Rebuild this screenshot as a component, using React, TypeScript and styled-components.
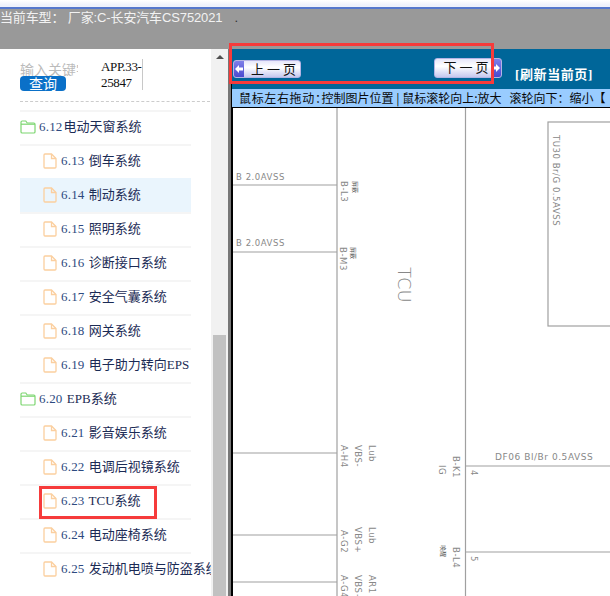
import React from "react";
import styled, { createGlobalStyle } from "styled-components";

const Global = createGlobalStyle`
  html, body { margin: 0; padding: 0; width: 610px; height: 596px; overflow: hidden; background: #fff; }
  #root { width: 610px; height: 596px; }
  * { box-sizing: border-box; }
`;

const CJK = `"Noto Sans CJK SC", sans-serif`;
const MIXED = `"Liberation Serif", "Noto Sans CJK SC", serif`;

const Page = styled.div`
  position: relative;
  width: 610px;
  height: 596px;
  overflow: hidden;
  display: flex;
  flex-direction: column;
  font-family: ${CJK};
`;

const TopStrip = styled.div`
  height: 9px;
  flex: none;
  background: linear-gradient(#ffffff, #eef1fb 70%);
  border-bottom: 2px solid #5577cc;
`;

const CarBar = styled.div`
  height: 40px;
  flex: none;
  background: #999999;
  color: #f2f2f2;
  font: 13px/17px "Liberation Sans", "Noto Sans CJK SC", sans-serif;
  letter-spacing: -0.13px;
  white-space: pre;
  display: flex;
  align-items: flex-start;
`;

const Dot = styled.span`
  margin-left: 12px;
  color: #333;
`;

const Main = styled.div`
  flex: 1;
  min-height: 0;
  display: flex;
`;

const Sidebar = styled.aside`
  width: 211px;
  flex: none;
  overflow: hidden;
  background: #fff;
  padding: 10px 0 0 20px;
`;

const SearchRow = styled.div`
  display: flex;
  width: 123px;
  height: 31px;
`;

const SearchLeft = styled.div`
  width: 81px;
  flex: none;
  padding-top: 3px;
`;

const KeyLabel = styled.div`
  width: 58px;
  height: 14px;
  overflow: hidden;
  white-space: nowrap;
  font-size: 14px;
  line-height: 14px;
  color: #bbbbbb;
`;

const QueryButton = styled.button`
  display: block;
  width: 46px;
  height: 15px;
  padding: 0;
  border: 0;
  border-radius: 4px;
  background: #0a70c8;
  color: #fff;
  font: 14px/15px ${CJK};
`;

const KeyInput = styled.div`
  width: 42px;
  height: 31px;
  border-right: 1px solid #c8c8c8;
  font: 13px/16px "Liberation Serif", serif;
  letter-spacing: -0.35px;
  color: #111;
`;

const Dashed = styled.div`
  width: 190px;
  margin-top: 11px;
  border-top: 1px dashed #cccccc;
`;

const Tree = styled.div`
  width: 171px;
  margin-top: 8px;
`;

const Row = styled.div<{ $file?: boolean; $active?: boolean }>`
  height: 34px;
  display: flex;
  align-items: center;
  gap: ${(p) => (p.$file ? "4px" : "3px")};
  padding-left: ${(p) => (p.$file ? "23px" : "0")};
  padding-bottom: 3px;
  border-top: 2px solid ${(p) => (p.$active ? "#eaf5fd" : "#f5f5f5")};
  background: ${(p) => (p.$active ? "#eaf5fd" : "transparent")};
  white-space: pre;
  font: 13px/16px ${MIXED};
  color: #1b2b55;
  svg {
    flex: none;
  }
`;

const Num = styled.span`
  color: #2d4a80;
  letter-spacing: 0.2px;
  margin-right: 1px;
`;

const Scrollbar = styled.div`
  width: 17px;
  flex: none;
  background: #f1f1f1;
  display: flex;
  flex-direction: column;
  align-items: center;
`;

const UpArrow = styled.div`
  margin-top: 6px;
  width: 0;
  height: 0;
  border-left: 4px solid transparent;
  border-right: 4px solid transparent;
  border-bottom: 4px solid #505050;
`;

const Thumb = styled.div`
  margin-top: 276px;
  width: 13px;
  flex: 1;
  background: #c1c1c1;
`;

const Splitter = styled.div`
  width: 3px;
  flex: none;
  background: #777777;
`;

const Viewer = styled.section`
  flex: 1;
  min-width: 0;
  display: flex;
  flex-direction: column;
  border-left: 1px solid #000;
`;

const NavBar = styled.div`
  height: 40px;
  flex: none;
  background: #006699;
  display: flex;
  align-items: flex-start;
`;

const PageButton = styled.button<{ $next?: boolean }>`
  width: 68px;
  height: ${(p) => (p.$next ? "20px" : "18px")};
  margin: ${(p) => (p.$next ? "9px 0 0 133px" : "11px 0 0 1px")};
  padding: 0;
  display: flex;
  flex-direction: ${(p) => (p.$next ? "row-reverse" : "row")};
  align-items: stretch;
  border: 1px solid #b4b4e4;
  border-radius: 3px;
  overflow: hidden;
  background: linear-gradient(#e6e6fa, #ffffff 40%, #c6c8ef);
  color: #111;
  font: 13px/16px ${CJK};
`;

const ArrowCap = styled.span`
  width: 10px;
  flex: none;
  display: flex;
  align-items: center;
  justify-content: center;
  background: linear-gradient(#7f7fe8, #4a4ad0);
`;

const PageLabel = styled.span<{ $next?: boolean }>`
  flex: 1;
  text-align: center;
  white-space: pre;
  padding-left: ${(p) => (p.$next ? "6px" : "3px")};
`;

const Refresh = styled.span`
  margin: 17px 0 0 13px;
  color: #fff;
  font: bold 13px/18px "Liberation Serif", "Noto Sans CJK SC", serif;
  letter-spacing: 0.6px;
  white-space: nowrap;
`;

const HintBar = styled.div`
  height: 19px;
  flex: none;
  background: #99ccff;
  border-bottom: 1px solid #000;
  color: #0a0a0a;
  font: 12px/17px ${CJK};
  white-space: pre;
  overflow: hidden;
  padding-left: 7px;
`;

const HintLead = styled.span`
  letter-spacing: 0.65px;
  font-feature-settings: "palt";
`;

const Diagram = styled.div`
  flex: 1;
  min-height: 0;
  background: #fff;
  border-left: 1px solid #000;
  overflow: hidden;
`;

const Sheet = styled.svg`
  display: block;
  text {
    font-family: "DejaVu Sans", sans-serif;
    font-size: 8.5px;
    fill: #888;
    letter-spacing: 0.55px;
  }
  .mark {
    font-family: "Noto Sans CJK SC", sans-serif;
    font-size: 6px;
    letter-spacing: 0;
    fill: #555;
  }
  .title {
    font-size: 18px;
    letter-spacing: 0;
    font-weight: 200;
  }
  .wide {
    font-size: 9px;
  }
`;

const Callout = styled.div<{ $x: number; $y: number; $w: number; $h: number }>`
  position: absolute;
  left: ${(p) => p.$x}px;
  top: ${(p) => p.$y}px;
  width: ${(p) => p.$w}px;
  height: ${(p) => p.$h}px;
  border: 3px solid #f63b3b;
  pointer-events: none;
`;

const FolderIcon = () => (
  <svg width="16" height="14" viewBox="0 0 16 14" fill="none" stroke="#7dd671" strokeWidth="1.2">
    <path d="M1 12V2.2C1 1.5 1.5 1 2.2 1h3.6l1.4 2h6.6c.7 0 1.2.5 1.2 1.2V12c0 .6-.5 1-1.2 1H2.2C1.5 13 1 12.6 1 12z" />
    <path d="M1 4.2h14" />
  </svg>
);

const FileIcon = () => (
  <svg width="14" height="16" viewBox="0 0 14 16" fill="none" stroke="#fbcf9f" strokeWidth="1.3">
    <path d="M1 2c0-.6.4-1 1-1h6.5L13 5.5V14c0 .6-.4 1-1 1H2c-.6 0-1-.4-1-1z" />
    <path d="M8.5 1v4.5H13" />
  </svg>
);

const ArrowGlyph = ({ right }: { right?: boolean }) => (
  <svg width="8" height="8" viewBox="0 0 8 8" fill="#fff">
    <path d={right ? "M4 0l4 4-4 4V5.5H0v-3h4z" : "M4 0L0 4l4 4V5.5h4v-3H4z"} />
  </svg>
);

const rows: { num: string; name: string; file: boolean; active?: boolean }[] = [
  { num: "6.12", name: "电动天窗系统", file: false },
  { num: "6.13", name: " 倒车系统", file: true },
  { num: "6.14", name: " 制动系统", file: true, active: true },
  { num: "6.15", name: " 照明系统", file: true },
  { num: "6.16", name: " 诊断接口系统", file: true },
  { num: "6.17", name: " 安全气囊系统", file: true },
  { num: "6.18", name: " 网关系统", file: true },
  { num: "6.19", name: " 电子助力转向EPS", file: true },
  { num: "6.20", name: " EPB系统", file: false },
  { num: "6.21", name: " 影音娱乐系统", file: true },
  { num: "6.22", name: " 电调后视镜系统", file: true },
  { num: "6.23", name: " TCU系统", file: true },
  { num: "6.24", name: " 电动座椅系统", file: true },
  { num: "6.25", name: " 发动机电喷与防盗系统", file: true },
];

const wires: [number, number, number, number][] = [
  [337, 108, 337, 596],
  [465.5, 108, 465.5, 596],
  [233, 185, 337, 185],
  [233, 252, 337, 252],
  [233, 453, 337, 453],
  [233, 535, 337, 535],
  [233, 582, 337, 582],
  [466, 466, 610, 466],
  [466, 552, 610, 552],
];

const sideLabels: [string, number, number][] = [
  ["TU30 Br/G 0.5AVSS", 553, 135],
  ["B-L3", 341, 181],
  ["B-M3", 340, 247],
  ["A-H4", 341, 445],
  ["VBS-", 355, 445],
  ["Lub", 369, 445],
  ["A-G2", 341, 530],
  ["VBS+", 355, 527],
  ["Lub", 369, 527],
  ["A-G4", 341, 575],
  ["VBS+", 355, 575],
  ["AR1", 369, 575],
  ["B-K1", 453, 456],
  ["IG", 439, 465],
  ["B-L4", 453, 547],
  ["4", 471, 470],
  ["5", 471, 556],
];

const marks: [string, number, number][] = [
  ["屏蔽", 353, 181],
  ["屏蔽", 351, 247],
  ["唤醒", 441, 545],
];

export default function App() {
  return (
    <Page>
      <Global />
      <TopStrip />
      <CarBar>
        当前车型： 厂家:C-长安汽车CS752021<Dot>.</Dot>
      </CarBar>
      <Main>
        <Sidebar>
          <SearchRow>
            <SearchLeft>
              <KeyLabel>输入关键字</KeyLabel>
              <QueryButton>查询</QueryButton>
            </SearchLeft>
            <KeyInput>APP.33-25847</KeyInput>
          </SearchRow>
          <Dashed />
          <Tree>
            {rows.map((r) => (
              <Row key={r.num} $file={r.file} $active={r.active}>
                {r.file ? <FileIcon /> : <FolderIcon />}
                <span>
                  <Num>{r.num}</Num>
                  {r.name}
                </span>
              </Row>
            ))}
          </Tree>
        </Sidebar>
        <Scrollbar>
          <UpArrow />
          <Thumb />
        </Scrollbar>
        <Splitter />
        <Viewer>
          <NavBar>
            <PageButton>
              <ArrowCap>
                <ArrowGlyph />
              </ArrowCap>
              <PageLabel>上 一 页</PageLabel>
            </PageButton>
            <PageButton $next>
              <ArrowCap>
                <ArrowGlyph right />
              </ArrowCap>
              <PageLabel $next>下 一 页</PageLabel>
            </PageButton>
            <Refresh>[刷新当前页]</Refresh>
          </NavBar>
          <HintBar>
            <HintLead>鼠标左右拖动：</HintLead>控制图片位置 | 鼠标滚轮向上:放大   滚轮向下：缩小【
          </HintBar>
          <Diagram>
            <Sheet width="377" height="488" viewBox="233 108 377 488">
              <g stroke="#a0a0a0" strokeWidth="1.2">
                {wires.map(([x1, y1, x2, y2]) => (
                  <line key={`${x1}-${y1}-${x2}-${y2}`} x1={x1} y1={y1} x2={x2} y2={y2} />
                ))}
              </g>
              <rect x="548" y="122" width="80" height="204" fill="none" stroke="#a0a0a0" strokeWidth="1.2" />
              <text x="236" y="180">B 2.0AVSS</text>
              <text x="236" y="246">B 2.0AVSS</text>
              <text x="495" y="460" className="wide">DF06 Bl/Br 0.5AVSS</text>
              {sideLabels.map(([t, x, y]) => (
                <text key={`${t}-${y}`} x={x} y={y} transform={`rotate(90 ${x} ${y})`}>
                  {t}
                </text>
              ))}
              <text x="398" y="267" transform="rotate(90 398 267)" className="title">TCU</text>
              {marks.map(([t, x, y]) => (
                <text key={`${x}-${y}`} x={x} y={y} transform={`rotate(90 ${x} ${y})`} className="mark">
                  {t}
                </text>
              ))}
            </Sheet>
          </Diagram>
        </Viewer>
      </Main>
      <Callout $x={229} $y={43} $w={265} $h={41} />
      <Callout $x={39} $y={486} $w={118} $h={33} />
    </Page>
  );
}
